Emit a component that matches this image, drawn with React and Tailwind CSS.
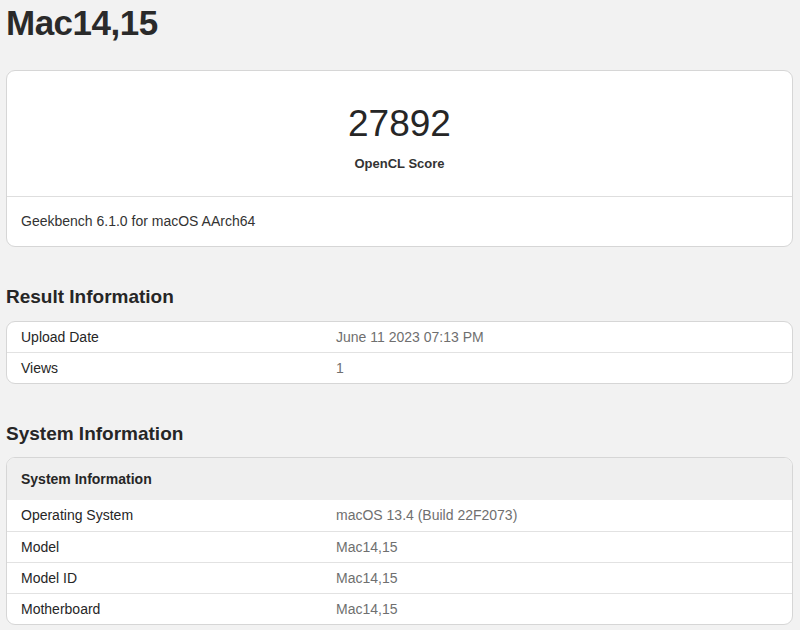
import React from "react";

const font = { fontFamily: '"Liberation Sans", Arial, Helvetica, sans-serif' };

function Row({ label, value, first }) {
  return (
    <div className={`grid grid-cols-[315px_1fr] h-[31px] items-center text-[14px] ${first ? "" : "border-t border-[#e2e2e2]"}`}>
      <div className="px-[14px] text-[#262626]">{label}</div>
      <div className="px-[14px] text-[#6f6f6f]">{value}</div>
    </div>
  );
}

export default function App() {
  return (
    <div className="min-h-[630px] bg-[#f2f2f2] pl-[6px] pr-[7px]" style={font}>
      <h1 className="pt-[5px] text-[35px] leading-[35px] font-bold tracking-[-0.5px] text-[#2a2a2a]">Mac14,15</h1>

      <div className="mt-[30px] rounded-[9px] border border-[#d6d6d6] bg-white">
        <div className="flex flex-col items-center pt-[34px] pb-[24px] border-b border-[#dedede]">
          <div className="text-[37px] leading-[37px] text-[#262626]">27892</div>
          <div className="mt-[14px] text-[13px] leading-[16px] font-bold text-[#333]">OpenCL Score</div>
        </div>
        <div className="h-[49px] flex items-center px-[14px] text-[14px] text-[#333]">Geekbench 6.1.0 for macOS AArch64</div>
      </div>

      <h2 className="mt-[36px] text-[19px] leading-[28px] font-bold text-[#262626]">Result Information</h2>
      <div className="mt-[10px] rounded-[9px] border border-[#d6d6d6] bg-white overflow-hidden">
        <div className="grid grid-cols-[315px_1fr] h-[30px] items-center text-[14px]">
          <div className="px-[14px] text-[#262626]">Upload Date</div>
          <div className="px-[14px] text-[#6f6f6f]">June 11 2023 07:13 PM</div>
        </div>
        <div className="grid grid-cols-[315px_1fr] h-[31px] items-center text-[14px] border-t border-[#e2e2e2]">
          <div className="px-[14px] text-[#262626]">Views</div>
          <div className="px-[14px] text-[#6f6f6f]">1</div>
        </div>
      </div>

      <h2 className="mt-[36px] text-[19px] leading-[28px] font-bold text-[#262626]">System Information</h2>
      <div className="mt-[9px] rounded-[9px] border border-[#d6d6d6] bg-white overflow-hidden">
        <div className="h-[42px] flex items-center px-[14px] bg-[#efefef] text-[14px] font-bold text-[#262626]">System Information</div>
        <Row first label="Operating System" value="macOS 13.4 (Build 22F2073)" />
        <Row label="Model" value="Mac14,15" />
        <Row label="Model ID" value="Mac14,15" />
        <Row label="Motherboard" value="Mac14,15" />
      </div>
      <div className="h-[20px]" />
    </div>
  );
}
